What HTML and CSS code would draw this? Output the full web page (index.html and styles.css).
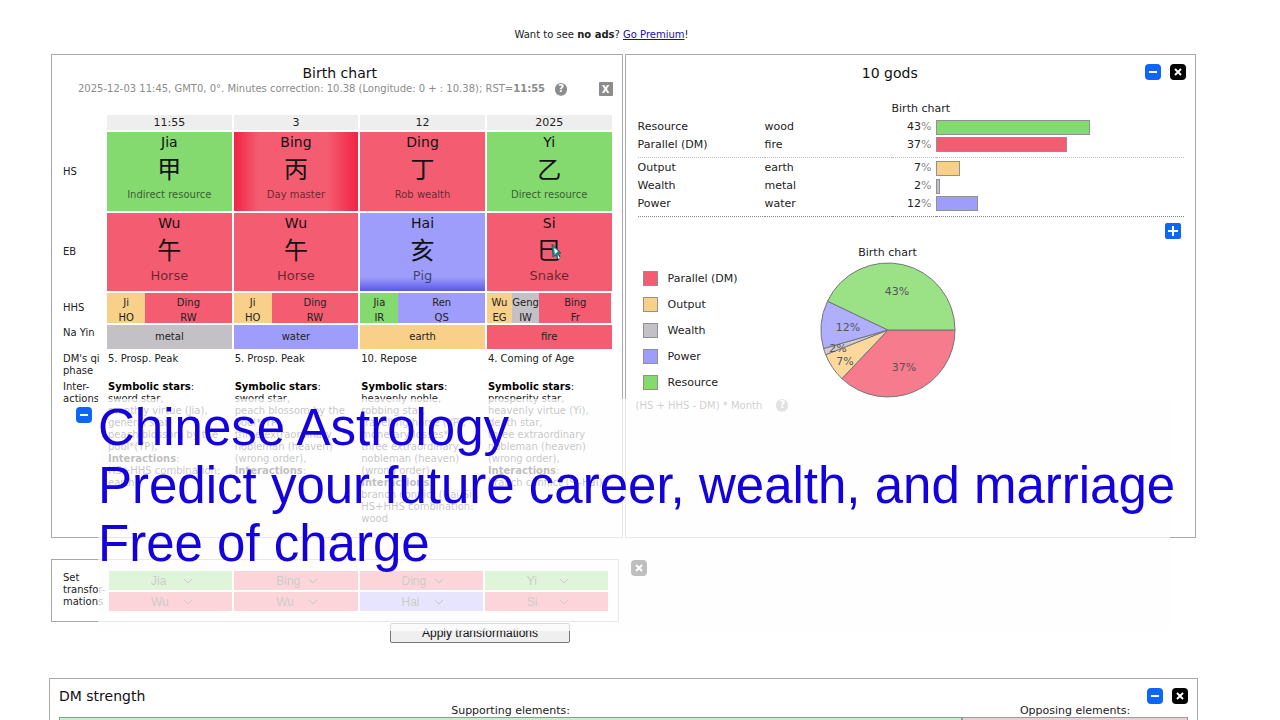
FILE: index.html
```
<!DOCTYPE html>
<html lang="en">
<head>
    <meta charset="UTF-8">
    <meta name="viewport" content="width=device-width, initial-scale=1.0">
    <title>Birth chart</title>
    <link rel="stylesheet" href="styles.css">
</head>
<body>
    <div class="page">
        <p class="ads">Want to see <b>no ads</b>? <a href="#">Go Premium</a>!</p>

        <div class="panels">
            <section class="panel chart">
                <h2>Birth chart</h2>
                <div class="chart-info">
                    <span>2025-12-03 11:45, GMT0, 0°. Minutes correction: 10.38 (Longitude: 0 + : 10.38); RST=<b>11:55</b></span>
                    <span class="help">?</span>
                    <button class="close-grey" aria-label="Close">X</button>
                </div>

                <table class="pillars">
                    <tr class="head">
                        <td class="label"></td>
                        <th>11:55</th>
                        <th>3</th>
                        <th>12</th>
                        <th>2025</th>
                    </tr>
                    <tr class="stems">
                        <td class="label">HS</td>
                        <td class="wood"><div class="name">Jia</div><div class="sign">甲</div><div class="god">Indirect resource</div></td>
                        <td class="fire day-master"><div class="name">Bing</div><div class="sign">丙</div><div class="god">Day master</div></td>
                        <td class="fire"><div class="name">Ding</div><div class="sign">丁</div><div class="god">Rob wealth</div></td>
                        <td class="wood"><div class="name">Yi</div><div class="sign">乙</div><div class="god">Direct resource</div></td>
                    </tr>
                    <tr class="branches">
                        <td class="label">EB</td>
                        <td class="fire"><div class="name">Wu</div><div class="sign">午</div><div class="animal">Horse</div></td>
                        <td class="fire"><div class="name">Wu</div><div class="sign">午</div><div class="animal">Horse</div></td>
                        <td class="water month"><div class="name">Hai</div><div class="sign">亥</div><div class="animal">Pig</div></td>
                        <td class="fire"><div class="name">Si</div><div class="sign">巳</div><div class="animal">Snake</div></td>
                    </tr>
                    <tr class="hidden-stems">
                        <td class="label">HHS</td>
                        <td><div class="split"><div class="earth">Ji<br>HO</div><div class="fire">Ding<br>RW</div></div></td>
                        <td><div class="split"><div class="earth">Ji<br>HO</div><div class="fire">Ding<br>RW</div></div></td>
                        <td><div class="split"><div class="wood">Jia<br>IR</div><div class="water">Ren<br>QS</div></div></td>
                        <td><div class="split three"><div class="earth">Wu<br>EG</div><div class="metal">Geng<br>IW</div><div class="fire">Bing<br>Fr</div></div></td>
                    </tr>
                    <tr class="na-yin">
                        <td class="label top">Na Yin</td>
                        <td class="metal">metal</td>
                        <td class="water">water</td>
                        <td class="earth">earth</td>
                        <td class="fire">fire</td>
                    </tr>
                    <tr class="qi">
                        <td class="label">DM's qi phase</td>
                        <td>5. Prosp. Peak</td>
                        <td>5. Prosp. Peak</td>
                        <td>10. Repose</td>
                        <td>4. Coming of Age</td>
                    </tr>
                    <tr class="stars">
                        <td class="label">Inter-<br>actions
                            <button class="icon blue" aria-label="Collapse"><svg viewBox="0 0 16 16"><path d="M4 8h8"/></svg></button>
                        </td>
                        <td><b>Symbolic stars</b>:<br>sword star,<br>monthly virtue (Jia),<br>general star,<br>peach blossom by the<br>pool*(YP),<br><b>Interactions</b>:<br>HS+HHS combination:<br>earth</td>
                        <td><b>Symbolic stars</b>:<br>sword star,<br>peach blossom by the<br>pool*(YP),<br>three extraordinary<br>nobleman (heaven)<br>(wrong order),<br><b>Interactions</b>:</td>
                        <td><b>Symbolic stars</b>:<br>heavenly noble,<br>robbing star,<br>travelling horse (YP),<br>monetary losses*,<br>three extraordinary<br>nobleman (heaven)<br>(wrong order),<br><b>Interactions</b>:<br>branch conflict (Hai-Si),<br>HS+HHS combination:<br>wood</td>
                        <td><b>Symbolic stars</b>:<br>prosperity star,<br>heavenly virtue (Yi),<br>death star,<br>three extraordinary<br>nobleman (heaven)<br>(wrong order),<br><b>Interactions</b>:<br>branch conflict (Si-Hai)</td>
                    </tr>
                </table>
            </section>

            <section class="panel gods">
                <div class="gods-head">
                    <h2>10 gods</h2>
                    <button class="icon blue" aria-label="Collapse"><svg viewBox="0 0 16 16"><path d="M4 8h8"/></svg></button>
                    <button class="icon black" aria-label="Close"><svg viewBox="0 0 16 16"><path d="M5 5l6 6M11 5l-6 6"/></svg></button>
                </div>

                <table class="bars">
                    <colgroup>
                        <col class="god-name">
                        <col class="element">
                        <col class="percent">
                        <col>
                    </colgroup>
                    <tr>
                        <td></td>
                        <td></td>
                        <th colspan="2">Birth chart</th>
                    </tr>
                    <tr>
                        <td>Resource</td><td>wood</td><td class="pct">43<i>%</i></td>
                        <td><div class="bar wood" style="width: 62%"></div></td>
                    </tr>
                    <tr class="line">
                        <td>Parallel (DM)</td><td>fire</td><td class="pct">37<i>%</i></td>
                        <td><div class="bar fire" style="width: 53%"></div></td>
                    </tr>
                    <tr class="after-line">
                        <td>Output</td><td>earth</td><td class="pct">7<i>%</i></td>
                        <td><div class="bar earth" style="width: 10%"></div></td>
                    </tr>
                    <tr>
                        <td>Wealth</td><td>metal</td><td class="pct">2<i>%</i></td>
                        <td><div class="bar metal" style="width: 2%"></div></td>
                    </tr>
                    <tr class="line last">
                        <td>Power</td><td>water</td><td class="pct">12<i>%</i></td>
                        <td><div class="bar water" style="width: 17%"></div></td>
                    </tr>
                </table>

                <div class="expand">
                    <button class="icon blue square" aria-label="Expand"><svg viewBox="0 0 16 16"><path d="M3 8h10M8 3v10"/></svg></button>
                </div>

                <div class="pie-row">
                    <ul class="legend">
                        <li><span class="swatch fire"></span>Parallel (DM)</li>
                        <li><span class="swatch earth"></span>Output</li>
                        <li><span class="swatch metal"></span>Wealth</li>
                        <li><span class="swatch water"></span>Power</li>
                        <li><span class="swatch wood"></span>Resource</li>
                    </ul>
                    <figure class="pie">
                        <figcaption>Birth chart</figcaption>
                        <svg width="136" height="136" viewBox="0 0 136 136">
                            <path fill="#f67b8d" d="M68 68L135 68A67 67 0 0 1 21.9 116.6Z"/>
                            <path fill="#fbd89c" d="M68 68L21.9 116.6A67 67 0 0 1 5.7 92.7Z"/>
                            <path fill="#d0cdd2" d="M68 68L5.7 92.7A67 67 0 0 1 3.6 86.5Z"/>
                            <path fill="#b0affd" d="M68 68L3.6 86.5A67 67 0 0 1 7.5 39.2Z"/>
                            <path fill="#9be287" d="M68 68L7.5 39.2A67 67 0 0 1 135 68Z"/>
                            <text x="77" y="33">43%</text>
                            <text x="28" y="69">12%</text>
                            <text x="18" y="90">2%</text>
                            <text x="25" y="103">7%</text>
                            <text x="84" y="109">37%</text>
                        </svg>
                    </figure>
                </div>
                <p class="formula">(HS + HHS - DM) * Month <span class="help">?</span></p>
            </section>
        </div>

        <div class="transform-row">
            <section class="panel transform">
                <div class="transform-label">Set<br>transfor-<br>mations</div>
                <div class="selects">
                    <label class="pick wood"><select aria-label="Hour stem"><option>Jia</option></select><svg viewBox="0 0 10 6"><path d="M1 1l4 4 4-4"/></svg></label>
                    <label class="pick fire"><select aria-label="Day stem"><option>Bing</option></select><svg viewBox="0 0 10 6"><path d="M1 1l4 4 4-4"/></svg></label>
                    <label class="pick fire"><select aria-label="Month stem"><option>Ding</option></select><svg viewBox="0 0 10 6"><path d="M1 1l4 4 4-4"/></svg></label>
                    <label class="pick wood"><select aria-label="Year stem"><option>Yi</option></select><svg viewBox="0 0 10 6"><path d="M1 1l4 4 4-4"/></svg></label>
                    <label class="pick fire"><select aria-label="Hour branch"><option>Wu</option></select><svg viewBox="0 0 10 6"><path d="M1 1l4 4 4-4"/></svg></label>
                    <label class="pick fire"><select aria-label="Day branch"><option>Wu</option></select><svg viewBox="0 0 10 6"><path d="M1 1l4 4 4-4"/></svg></label>
                    <label class="pick water"><select aria-label="Month branch"><option>Hai</option></select><svg viewBox="0 0 10 6"><path d="M1 1l4 4 4-4"/></svg></label>
                    <label class="pick fire"><select aria-label="Year branch"><option>Si</option></select><svg viewBox="0 0 10 6"><path d="M1 1l4 4 4-4"/></svg></label>
                </div>
            </section>
            <button class="icon black" aria-label="Close"><svg viewBox="0 0 16 16"><path d="M5 5l6 6M11 5l-6 6"/></svg></button>
        </div>
        <button class="apply">Apply transformations</button>

        <section class="panel strength">
            <div class="strength-head">
                <h2>DM strength</h2>
                <button class="icon blue" aria-label="Collapse"><svg viewBox="0 0 16 16"><path d="M4 8h8"/></svg></button>
                <button class="icon black" aria-label="Close"><svg viewBox="0 0 16 16"><path d="M5 5l6 6M11 5l-6 6"/></svg></button>
            </div>
            <div class="strength-sides">
                <div class="side supporting">Supporting elements:<div class="side-bar"></div></div>
                <div class="side opposing">Opposing elements:<div class="side-bar"></div></div>
            </div>
        </section>
    </div>

    <div class="banner">
        Chinese Astrology<br>
        Predict your future career, wealth, and marriage<br>
        Free of charge
    </div>

    <svg class="cursor" viewBox="0 0 12 18">
        <path fill="#2a8f8a" stroke="#1f5f66" d="M1 1l9 9-3 .5L9 15l-2 1-2-4-3 2z"/>
        <path fill="#fff" d="M3 5l4 3-3 3z"/>
        <path fill="#fff" d="M7 12l2 3-2 1z"/>
    </svg>
</body>
</html>
```
FILE: styles.css
```
:root {
    --wood: #84d96f;
    --fire: #f45d71;
    --earth: #f8d08a;
    --metal: #c4c1c6;
    --water: #9e9dfc;
    --line: #a8a8a8;
}

* {
    box-sizing: border-box;
}

body {
    margin: 0;
    height: 100vh;
    overflow: hidden;
    position: relative;
    background: #fff;
    color: #222;
    font-family: Verdana, "DejaVu Sans", "Noto Sans CJK SC", sans-serif;
    font-size: 11px;
    line-height: 14px;
}

.page {
    padding: 28px 84px 0 51px;
}

h2 {
    margin: 0;
    font-size: 14px;
    line-height: 18px;
    font-weight: normal;
    color: #111;
}

.wood { background-color: var(--wood); }
.fire { background-color: var(--fire); }
.earth { background-color: var(--earth); }
.metal { background-color: var(--metal); }
.water { background-color: var(--water); }

.ads {
    margin: 0 0 12px;
    padding-right: 44px;
    text-align: center;
    font-size: 10px;
}

.ads a {
    color: #1a0dab;
}

.panel {
    border: 1px solid var(--line);
}

.panels {
    display: grid;
    grid-template-columns: 1fr 1fr;
    gap: 2px;
    min-height: 484px;
}

/* buttons */
.icon {
    width: 16px;
    height: 16px;
    padding: 0;
    border: none;
    border-radius: 4px;
    cursor: pointer;
}

.icon svg {
    display: block;
    width: 16px;
    height: 16px;
    fill: none;
    stroke: #fff;
    stroke-width: 2;
}

.blue { background: #0d66f5; }
.black { background: #000; }
.square { border-radius: 2px; }

.close-grey {
    width: 14px;
    height: 14px;
    margin-left: auto;
    padding: 0;
    border: none;
    border-radius: 1px;
    background: #8c8c8c;
    color: #fff;
    font: bold 10px "DejaVu Sans", sans-serif;
}

.help {
    display: inline-block;
    width: 12px;
    height: 12px;
    border-radius: 50%;
    background: #8c8c8c;
    box-shadow: 0 1px 0 #aaa;
    color: #fff;
    font-weight: bold;
    font-size: 10px;
    line-height: 12px;
    text-align: center;
}

/* birth chart */
.chart {
    padding-top: 9px;
}

.chart h2 {
    padding-left: 6px;
    text-align: center;
}

.chart-info {
    display: flex;
    align-items: center;
    gap: 10px;
    padding: 0 9px 0 26px;
    color: #8c8c8c;
    font-size: 10px;
}

.pillars {
    width: calc(100% - 17px);
    margin: 17px 8px 0 9px;
    table-layout: fixed;
    border-spacing: 2px;
    font-size: 10px;
    line-height: 12px;
}

.pillars td,
.pillars th {
    padding: 0;
    text-align: center;
    font-weight: normal;
}

.pillars .label {
    width: 42px;
    text-align: left;
}

.head th {
    height: 15px;
    background: #eee;
    font-size: 11px;
}

.stems { height: 79px; }
.branches { height: 78px; }
.hidden-stems { height: 30px; }
.na-yin { height: 24px; }
.qi { height: 26px; }

.name {
    padding-top: 1px;
    font-size: 14px;
    line-height: 18px;
    color: #111;
}

.sign {
    font-size: 24px;
    line-height: 38px;
    color: #111;
}

.stems td,
.branches td {
    vertical-align: top;
}

.stems .label,
.branches .label {
    vertical-align: middle;
}

.god,
.animal {
    color: #0009;
}

.animal {
    font-size: 13px;
}

.day-master {
    background-image: linear-gradient(90deg, #f02443, #f0244300 20%, #f0244300 75%, #f02443);
}

.month {
    background-image: linear-gradient(0deg, #5a58e8, #5a58e800 18%);
}

.split {
    display: grid;
    grid-template-columns: 38fr 86fr;
    height: 30px;
    line-height: 15px;
}

.split > div {
    padding-top: 2px;
    height: 30px;
    min-width: 0;
    overflow: hidden;
}

.three {
    grid-template-columns: 25fr 27fr 72fr;
}

.pillars .top {
    padding-top: 2px;
    vertical-align: top;
}

.pillars .qi td,
.pillars .stars td {
    padding: 2px 0 0 1px;
    text-align: left;
    vertical-align: top;
    white-space: nowrap;
}

.pillars .qi .label,
.pillars .stars .label {
    padding-left: 0;
}

.pillars .qi .label {
    white-space: normal;
}

.stars b {
    color: #000;
}

.stars .icon {
    display: block;
    margin: 2px 0 0 13px;
}

/* 10 gods */
.gods {
    padding: 9px 9px 0 10px;
}

.gods-head {
    display: flex;
    gap: 9px;
}

.gods-head h2 {
    flex: 1;
    padding-left: 8px;
    text-align: center;
}

.bars {
    width: calc(100% - 4px);
    margin: 18px 0 0 2px;
    table-layout: fixed;
    border-collapse: collapse;
}

.bars td {
    height: 18px;
    padding: 0;
}

.bars th {
    padding: 0;
    font-weight: normal;
    text-align: left;
}

.god-name,
.element {
    width: 127px;
}

.percent {
    width: 44px;
}

.bars .pct {
    text-align: right;
    padding-right: 4px;
}

.pct i {
    font-style: normal;
    color: #888;
}

.bar {
    height: 15px;
    border: 1px solid #938f98;
}

.bars .line td {
    height: 21px;
    padding-bottom: 3px;
    border-bottom: 1px dotted #bbb;
}

.bars .after-line td {
    height: 20px;
    padding-top: 2px;
}

.bars .last td {
    border-bottom-color: #888;
}

.expand {
    display: flex;
    justify-content: flex-end;
    padding: 6px 5px 0 0;
}

.pie-row {
    display: flex;
    margin-top: 7px;
}

.legend {
    width: 184px;
    margin: 20px 0 0;
    padding: 0 0 0 7px;
    list-style: none;
}

.legend li {
    display: flex;
    align-items: center;
    gap: 10px;
    height: 26px;
}

.swatch {
    width: 15px;
    height: 15px;
    border: 1px solid #938f98;
}

.pie {
    margin: 0;
    text-align: center;
}

.pie svg {
    display: block;
    margin-top: 2px;
}

.pie path {
    stroke: #77737a;
    stroke-width: 1;
}

.pie text {
    fill: #555;
    text-anchor: middle;
}

.formula {
    display: flex;
    gap: 14px;
    margin: 1px 0 0;
    color: #444;
    font-size: 10px;
}

/* transformations */
.transform-row {
    display: flex;
    align-items: flex-start;
    gap: 12px;
    margin-top: 21px;
}

.transform {
    display: flex;
    width: 568px;
    height: 63px;
    padding: 11px 10px 0 11px;
}

.transform-label {
    width: 46px;
    padding-top: 1px;
    font-size: 10px;
    line-height: 12px;
}

.selects {
    flex: 1;
    display: grid;
    grid-template-columns: repeat(4, 1fr);
    grid-auto-rows: 19px;
    gap: 2px;
}

.pick {
    position: relative;
}

.pick select {
    appearance: none;
    width: 100%;
    height: 19px;
    padding: 0 0 0 42px;
    border: none;
    background: transparent;
    color: #333;
    font: 12px "Liberation Sans", Arial, sans-serif;
}

.pick svg {
    position: absolute;
    left: 74px;
    top: 7px;
    width: 10px;
    height: 6px;
    fill: none;
    stroke: #333;
    pointer-events: none;
}

.apply {
    display: block;
    width: 180px;
    height: 20px;
    margin: 1px 0 0 339px;
    padding: 0;
    border: 1px solid #777;
    border-radius: 2px;
    background: #efefef;
    color: #111;
    font: 12px "Liberation Sans", Arial, sans-serif;
}

.transform-row .icon {
    margin-top: 1px;
}

/* DM strength */
.strength {
    margin: 35px -2px 0;
    padding: 8px 9px 0;
}

.strength-head {
    display: flex;
    align-items: center;
    gap: 9px;
}

.strength-head h2 {
    flex: 1;
}

.strength-sides {
    display: grid;
    grid-template-columns: 4fr 1fr;
    line-height: 12px;
}

.side {
    text-align: center;
}

.side-bar {
    height: 18px;
    border: 1px solid #7fa886;
    background: #cfe8d2;
}

.opposing .side-bar {
    border-color: #a39a9c;
    background: #e8d0d4;
}

/* banner over the page */
.banner {
    position: absolute;
    left: 98px;
    right: 110px;
    top: 399px;
    height: 232px;
    background: rgba(253, 253, 254, 0.75);
    color: #1400dc;
    font-family: "Liberation Sans", Arial, sans-serif;
    font-size: 51px;
    line-height: 58px;
    white-space: nowrap;
}

.cursor {
    position: absolute;
    left: 551px;
    top: 243px;
    width: 12px;
    height: 18px;
}
```
